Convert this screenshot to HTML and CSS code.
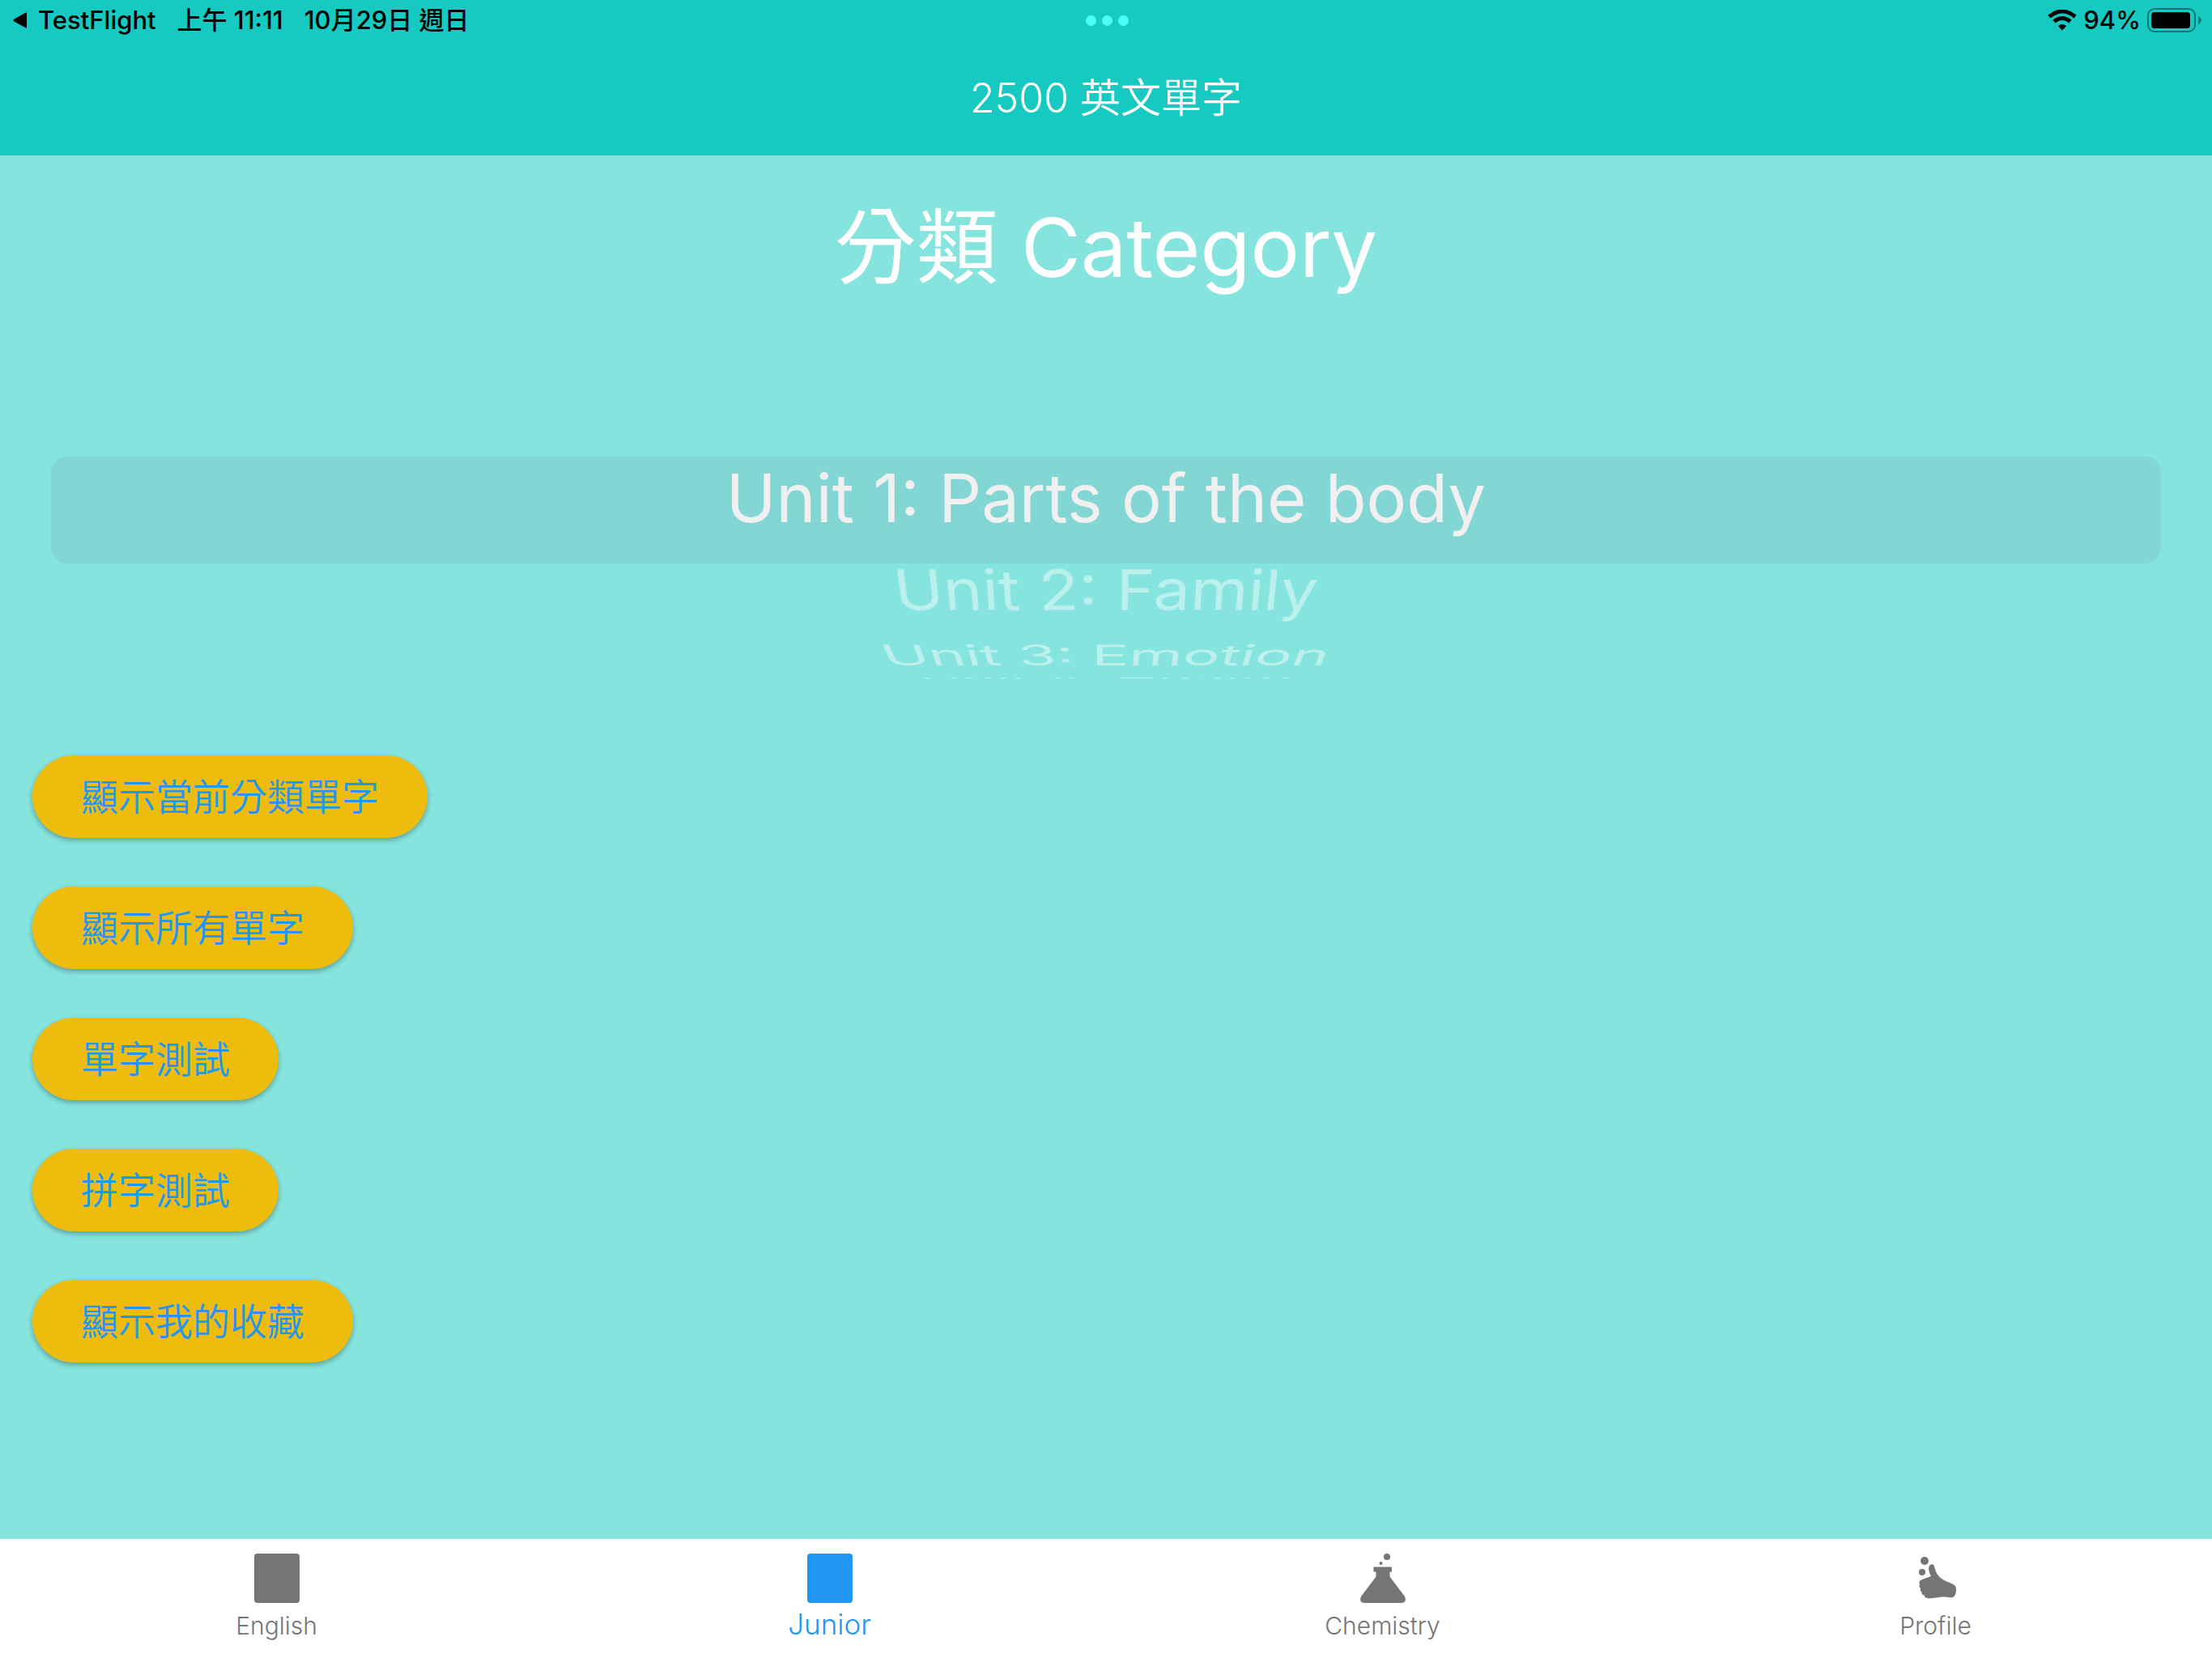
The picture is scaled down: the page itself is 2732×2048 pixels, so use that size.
FILE: index.html
```html
<!DOCTYPE html>
<html lang="zh-Hant">
<head>
<meta charset="utf-8">
<meta name="viewport" content="width=device-width, initial-scale=1">
<title>2500 英文單字</title>
<link rel="stylesheet" href="styles.css">
</head>
<body>
<header class="top">
  <div class="status">
    <div class="status-left">
      <a class="back" href="#testflight"><svg class="back-icon" viewBox="0 0 17 20" aria-hidden="true"><path d="M17 1.500V18.500Q17 20 15.500 19.200L1 11.200Q0 10 1 8.800L15.500.8Q17 0 17 1.500z"/></svg>TestFlight</a>
      <span>上午 11:11</span>
      <span>10月29日 週日</span>
    </div>
    <div class="dots"><i></i><i></i><i></i></div>
    <div class="status-right">
      <svg class="wifi" viewBox="0 0 36 26" aria-hidden="true">
        <path class="arc" d="M2 8.500Q18-4.500 34 8.500"/>
        <path class="arc" d="M8 14.500Q18 6.500 28 14.500"/>
        <path d="M18 25.500L12.800 20Q18 16 23.200 20z"/>
      </svg>
      <span>94%</span>
      <svg class="battery" viewBox="0 0 67 30" aria-hidden="true">
        <rect class="shell" x="1" y="1" width="58" height="28" rx="8"/>
        <rect x="5" y="5" width="48" height="20" rx="4"/>
        <path class="nub" d="M63 10Q67 12 67 15T63 20z"/>
      </svg>
    </div>
  </div>
  <div class="title">2500 英文單字</div>
</header>

<main class="content">
  <h1 class="heading">分類 Category</h1>
  <div class="picker" role="listbox" aria-label="分類 Category">
    <div class="selection"></div>
    <div class="row row-1" role="option" aria-selected="true">Unit 1: Parts of the body</div>
    <div class="row row-2" role="option" aria-selected="false">Unit 2: Family</div>
    <div class="row row-3" role="option" aria-selected="false">Unit 3: Emotion</div>
    <div class="row row-4" role="option" aria-selected="false">Unit 4: Health</div>
  </div>
  <div class="actions">
    <button class="pill" type="button">顯示當前分類單字</button>
    <button class="pill" type="button">顯示所有單字</button>
    <button class="pill" type="button">單字測試</button>
    <button class="pill" type="button">拼字測試</button>
    <button class="pill" type="button">顯示我的收藏</button>
  </div>
</main>

<nav class="tabs">
  <a class="tab" href="#english">
    <svg class="tab-icon" viewBox="0 0 60 62" aria-hidden="true"><rect x="2" y="1" width="56" height="61" rx="4"/></svg>
    English
  </a>
  <a class="tab active" href="#junior" aria-current="page">
    <svg class="tab-icon" viewBox="0 0 60 62" aria-hidden="true"><rect x="2" y="1" width="56" height="61" rx="4"/></svg>
    Junior
  </a>
  <a class="tab" href="#chemistry">
    <svg class="tab-icon" viewBox="0 0 60 62" aria-hidden="true">
      <circle cx="35" cy="5" r="4"/><circle cx="27.500" cy="13" r="2"/>
      <path d="M18.500 17.500H41V23.500H38.500V29.500L57 54Q60 61 53 62H7Q0 61 3 54L21.500 29.500V23.500H18.500z"/>
    </svg>
    Chemistry
  </a>
  <a class="tab" href="#profile">
    <svg class="tab-icon" viewBox="0 0 60 62" aria-hidden="true">
      <circle cx="16" cy="10" r="5"/><circle cx="13" cy="24" r="4"/>
      <path d="M22 16C24 13 28 14 28 17C29 21 31 28 37 32C42 36 50 37 54 41C56 45 55 52 52 54.500C49 56 44 54.500 38 54.500C31 55 26 57 19 56Q16 55 15.500 52.500Q12 52 12.500 48.500Q10 47 11 43.500Q8.500 42 10 38.500Q8 35 13 33L24 29C22 25 20 19 22 16z"/>
    </svg>
    Profile
  </a>
</nav>
</body>
</html>
```
FILE: styles.css
```css
* {
  box-sizing: border-box;
}

body {
  margin: 0;
  min-height: 100vh;
  display: flex;
  flex-direction: column;
  background: #85e4de;
  font-family: Inter, "Noto Sans CJK TC", sans-serif;
  color: #fff;
}

a {
  color: inherit;
  text-decoration: none;
}

.top {
  background: #16c9c1;
  padding-bottom: 34px;
}

.status {
  display: grid;
  grid-template-columns: 1fr auto 1fr;
  align-items: center;
  height: 50px;
  padding: 0 13px 0 16px;
  color: #000;
  font-size: 31px;
  font-weight: 500;
  line-height: 36px;
}

.status-left {
  display: flex;
  gap: 26px;
}

.back {
  display: flex;
  align-items: center;
  gap: 14px;
}

.back-icon {
  width: 17px;
  height: 20px;
}

.dots {
  display: flex;
  gap: 7px;
}

.dots i {
  width: 13px;
  height: 13px;
  border-radius: 50%;
  background: #4ffff7;
}

.status-right {
  display: flex;
  justify-content: flex-end;
  align-items: center;
  gap: 8px;
}

.wifi {
  width: 36px;
  height: 26px;
}

.arc {
  fill: none;
  stroke: #000;
  stroke-width: 5;
}

.battery {
  width: 67px;
  height: 30px;
}

.shell {
  fill: none;
  stroke: #0b7a75;
  stroke-width: 2;
}

.nub {
  fill: #0b7a75;
}

.title {
  padding-top: 34px;
  text-align: center;
  font-size: 50px;
  font-weight: 350;
  line-height: 74px;
}

.content {
  flex: 1;
}

.heading {
  margin: 0;
  padding: 40px 0;
  text-align: center;
  font-size: 101px;
  font-weight: 400;
  line-height: 146px;
}

/* Wheel picker: rows sit on a drum of radius 251px, 27 degrees apart. */
.picker {
  display: grid;
  height: 423px;
  padding: 0 63px;
  align-content: center;
  overflow: hidden;
  perspective: 1100px;
}

.selection,
.row {
  grid-area: 1 / 1;
  height: 132px;
}

.selection {
  border-radius: 20px;
  background: #82d6d3;
}

.row {
  text-align: center;
  font-size: 83px;
  line-height: 102px;
}

.row-1 {
  color: #f0f0f0;
}

.row-2,
.row-3,
.row-4 {
  opacity: 0.45;
}

.row-2 {
  transform: translateZ(-251px) rotateX(-27deg) translateZ(251px);
}

.row-3 {
  transform: translateZ(-251px) rotateX(-54deg) translateZ(251px);
}

.row-4 {
  transform: translateZ(-251px) rotateX(-78deg) translateZ(251px);
}

.actions {
  display: flex;
  flex-direction: column;
  align-items: flex-start;
  gap: 60px;
  padding: 92px 40px;
}

.pill {
  height: 102px;
  padding: 0 60px 6px;
  border: 0;
  border-radius: 51px;
  background: #edbc0c;
  box-shadow: 0 3px 6px rgba(0, 0, 0, 0.3);
  color: #2196f3;
  font-family: inherit;
  font-size: 46px;
  font-weight: 350;
}

.tabs {
  display: grid;
  grid-template-columns: repeat(4, 1fr);
  height: 147px;
  background: #fff;
}

.tab {
  display: flex;
  flex-direction: column;
  align-items: center;
  gap: 6px;
  padding-top: 17px;
  color: #757575;
  fill: #757575;
  font-size: 30px;
  font-weight: 350;
  line-height: 44px;
}

.tab.active {
  color: #2196f3;
  fill: #2196f3;
  font-size: 35px;
  line-height: 40px;
}

.tab-icon {
  width: 60px;
  height: 62px;
}
```
